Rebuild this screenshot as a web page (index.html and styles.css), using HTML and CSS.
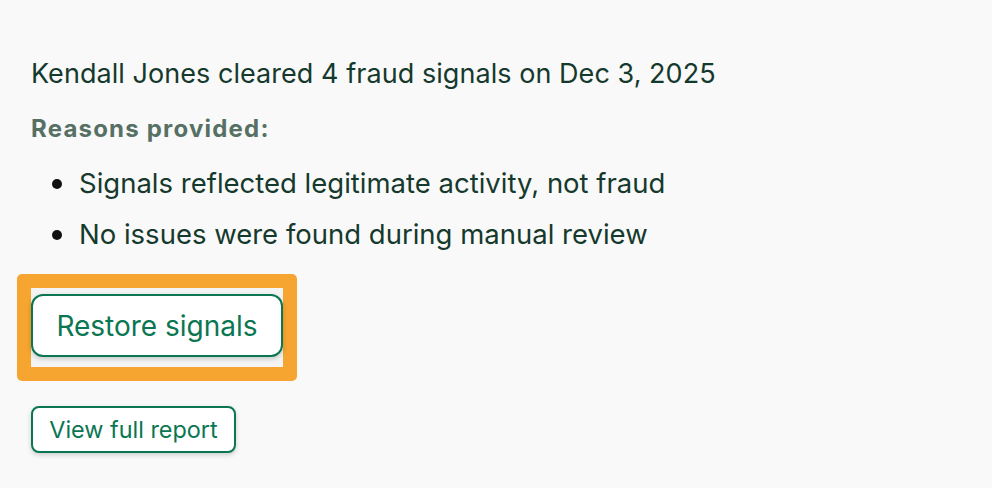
FILE: index.html
```html
<!DOCTYPE html>
<html>
<head>
<meta charset="utf-8">
<link rel="stylesheet" href="styles.css">
</head>
<body>
<main class="panel">
  <p class="summary">Kendall Jones cleared 4 fraud signals on Dec 3, 2025</p>
  <p class="reasons-label">Reasons provided:</p>
  <ul class="reasons">
    <li>Signals reflected legitimate activity, not fraud</li>
    <li>No issues were found during manual review</li>
  </ul>
  <div class="highlight">
    <div class="highlight-inner">
      <button class="btn btn-lg">Restore signals</button>
    </div>
  </div>
  <button class="btn btn-sm">View full report</button>
</main>
</body>
</html>
```
FILE: styles.css
```css
html, body {
  margin: 0;
  padding: 0;
  background: #f9f9f9;
}
body {
  font-family: "Inter", "Liberation Sans", sans-serif;
  color: #16392d;
  width: 992px;
  height: 488px;
  overflow: hidden;
}
.panel {
  padding: 58px 0 0 31px;
  display: flex;
  flex-direction: column;
  align-items: flex-start;
}
.summary {
  margin: 0;
  font-size: 27px;
  line-height: 32px;
  letter-spacing: 0.05px;
}
.reasons-label {
  margin: 25px 0 0;
  font-size: 24px;
  line-height: 28px;
  font-weight: 700;
  letter-spacing: 1.2px;
  color: #567064;
}
.reasons {
  margin: 15px 0 0;
  padding: 0 0 0 21px;
  list-style: none;
  font-size: 27.5px;
  line-height: 51px;
}
.reasons li {
  display: flex;
  align-items: center;
  gap: 17px;
}
.reasons li::before {
  content: "";
  flex: none;
  width: 10px;
  height: 10px;
  border-radius: 50%;
  background: #111;
}
.highlight {
  margin: 14px 0 0 -14px;
  border: 14px solid #f6a531;
  border-radius: 5px;
}
.highlight-inner {
  background: #f3f4f3;
  padding: 6px 0 10px;
}
.btn {
  display: block;
  font-family: inherit;
  background: #fff;
  color: #0b7652;
  border: 2px solid #0b7652;
  cursor: pointer;
  padding: 0;
  box-shadow: 0 2px 5px rgba(0, 0, 0, 0.18);
}
.btn-lg {
  width: 252px;
  height: 63px;
  border-radius: 12px;
  font-size: 28px;
}
.btn-sm {
  margin-top: 25px;
  width: 205px;
  height: 47px;
  border-radius: 8px;
  font-size: 23.4px;
}
```
